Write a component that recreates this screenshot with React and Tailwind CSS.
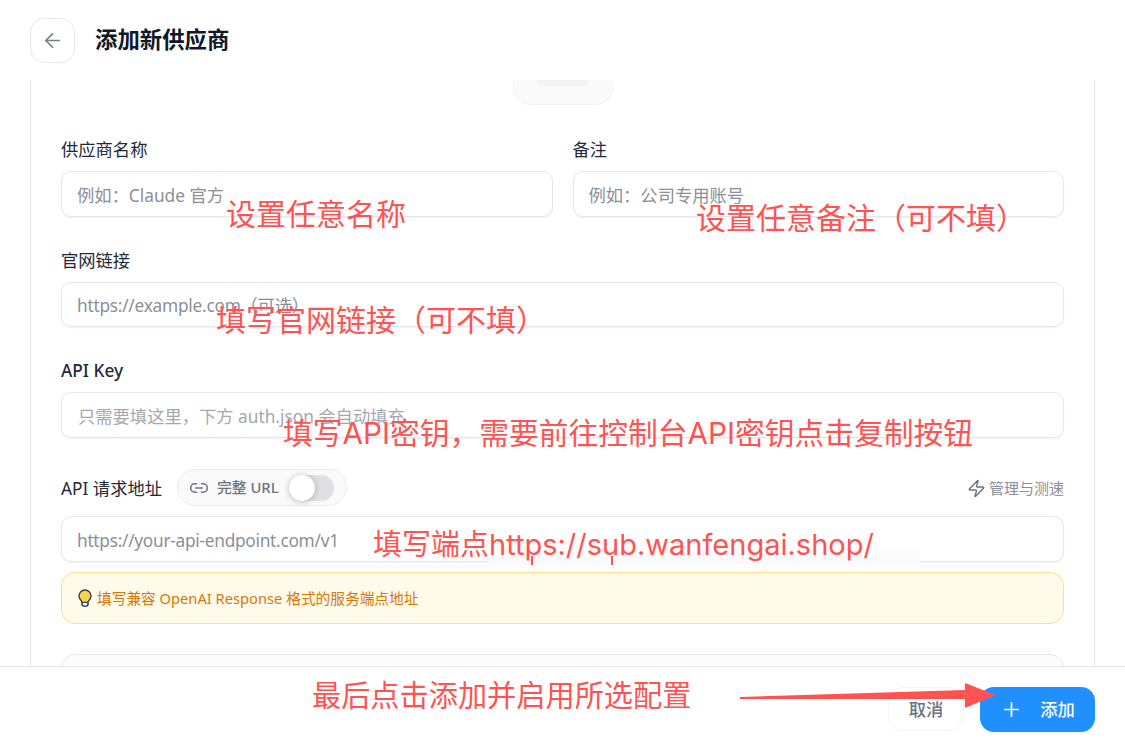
import React from "react";
import { ArrowLeft, Link2, Zap, Plus } from "lucide-react";

const FONT = "[font-family:'Noto_Sans','Noto_Sans_CJK_SC',sans-serif]";
const NOTE_FONT = "[font-family:Inter,'Noto_Sans_CJK_SC',sans-serif]";

function Label({ children, className = "" }) {
  return <div className={`text-[17.3px] leading-[20px] text-[#1f2937] ${className}`}>{children}</div>;
}

function Field({ placeholder, className = "" }) {
  return (
    <input
      readOnly
      placeholder={placeholder}
      className={`w-full rounded-[10px] border border-[#e5e7eb] bg-white px-[15px] pt-[2px] text-[17.3px] shadow-[0_1px_2px_rgba(0,0,0,0.06)] outline-none ${className}`}
    />
  );
}

function Note({ className, children }) {
  return (
    <div className={`absolute whitespace-nowrap leading-[40px] text-[#ff5252] ${NOTE_FONT} ${className}`}>
      {children}
    </div>
  );
}

function Bulb() {
  return (
    <svg width="14" height="18" viewBox="0 0 14 18" fill="none" aria-hidden="true" className="shrink-0">
      <path
        d="M7 1a6 6 0 0 0-6 6c0 2.2 1.2 3.5 2.3 4.7.5.5.7 1 .7 1.6V15a2 2 0 0 0 2 2h2a2 2 0 0 0 2-2v-1.7c0-.6.2-1.1.7-1.6C11.8 10.5 13 9.2 13 7a6 6 0 0 0-6-6z"
        fill="#fcd34d"
        stroke="#374151"
        strokeWidth="1.4"
      />
      <path d="M4.2 13.4h5.6V15a2 2 0 0 1-2 2H6.2a2 2 0 0 1-2-2z" fill="#fff" stroke="#374151" strokeWidth="1.2" />
    </svg>
  );
}

export default function App() {
  return (
    <div className={`relative flex h-[750px] w-[1125px] flex-col overflow-hidden bg-white ${FONT}`}>
      <header className="flex h-20 shrink-0 items-start gap-[20px] pl-[30px] pt-[18px]">
        <button className="flex h-[45px] w-[45px] items-center justify-center rounded-[14px] border border-[#e5e7eb] bg-white text-[#7b7f8a]">
          <ArrowLeft size={23} strokeWidth={1.8} />
        </button>
        <h1 className="mt-[7px] text-[22.4px] font-bold leading-[30px] text-[#111827]">添加新供应商</h1>
      </header>

      <main className="min-h-0 flex-1 overflow-hidden px-[30px]">
        <div className="h-full border-x border-[#e5e7eb] px-[30px]">
          <div className="flex justify-center">
            <div className="flex h-[25px] w-[100px] justify-center rounded-b-[18px] border border-t-0 border-[#f3f3f3] bg-[#fafafa]">
              <div className="h-[6px] w-[53px] rounded-b-[12px] bg-[#f3f3f3]" />
            </div>
          </div>

          <div className="mt-[35px] grid grid-cols-2 gap-x-[20px]">
            <div>
              <Label>供应商名称</Label>
              <Field placeholder="例如：Claude 官方" className="mt-[11px] h-[46px] placeholder:text-[#8b8f98]" />
            </div>
            <div>
              <Label>备注</Label>
              <Field placeholder="例如：公司专用账号" className="mt-[11px] h-[46px] placeholder:text-[#8b8f98]" />
            </div>
          </div>

          <Label className="mt-[34px]">官网链接</Label>
          <Field placeholder="https://example.com（可选）" className="mt-[11px] h-[45px] tracking-[-0.25px] placeholder:text-[#8b8f98]" />

          <Label className="mt-[34px] font-medium">API Key</Label>
          <Field placeholder="只需要填这里，下方 auth.json 会自动填充" className="mt-[11px] h-[46px] pl-[16px] placeholder:text-[#a3a7b0]" />

          <div className="mt-[31px] flex h-[37px] items-center">
            <Label className="pt-[2px]">API 请求地址</Label>
            <div className="ml-[15px] flex h-[37px] w-[170px] items-center rounded-full border border-[#ececee] bg-[#fafafa] pl-[11px]">
              <Link2 size={20} strokeWidth={1.8} className="text-[#6b7280]" />
              <span className="ml-[8px] text-[14.8px] font-medium text-[#6b7280]">完整 URL</span>
              <div className="ml-[10px] flex h-[26px] w-[45px] items-center rounded-full bg-[#e0e0e3]">
                <div className="h-[26px] w-[26px] rounded-full bg-white shadow-[0_1px_6px_rgba(0,0,0,0.25)]" />
              </div>
            </div>
            <div className="ml-auto flex items-center gap-[3px] pt-[1px] text-[15px] text-[#8a8f98]">
              <Zap size={19} strokeWidth={1.8} className="text-[#6b7280]" />
              <span>管理与测速</span>
            </div>
          </div>

          <Field placeholder="https://your-api-endpoint.com/v1" className="mt-[10px] h-[46px] tracking-[-0.28px] placeholder:text-[#8b8f98]" />

          <div className="mt-[10px] flex h-[52px] items-center gap-[5px] rounded-[14px] border border-[#fde08a] bg-[#fffbeb] pl-[16px] text-[14.7px] text-[#d97706]">
            <Bulb />
            <span className="pt-[1px]">填写兼容 OpenAI Response 格式的服务端点地址</span>
          </div>

          <div className="mt-[30px] h-[60px] rounded-t-[14px] border border-[#e5e7eb] bg-[#fcfcfd]" />
        </div>
      </main>

      <footer className="flex h-[84px] shrink-0 items-start justify-end gap-[16px] border-t border-[#e5e7eb] bg-white pr-[30px] pt-[20px]">
        <button className="h-[44px] w-[76px] rounded-[14px] border border-[#f3f4f6] bg-white pt-[2px] text-[17.3px] font-medium text-[#6b7280]">
          取消
        </button>
        <button className="flex h-[45px] w-[115px] items-center justify-center gap-[17px] rounded-[14px] bg-[#2090ff] text-[17.3px] font-medium text-white">
          <Plus size={23} strokeWidth={1.8} />
          <span className="pt-[1px]">添加</span>
        </button>
      </footer>

      <Note className="left-[226px] top-[194px] text-[30px]">设置任意名称</Note>
      <Note className="left-[696px] top-[198px] text-[30px]">设置任意备注（可不填）</Note>
      <Note className="left-[216px] top-[300px] text-[30px]">填写官网链接（可不填）</Note>
      <Note className="left-[283px] top-[413px] text-[29.75px]">填写API密钥，需要前往控制台API密钥点击复制按钮</Note>

      <div className="absolute left-[488px] top-[538px] h-[26px] w-[432px] bg-gradient-to-b from-white to-[#fafafa]" />
      <div className="absolute left-[531px] top-[556px] h-[9px] w-[1.5px] bg-[#ff5252]" />
      <div className="absolute left-[611px] top-[556px] h-[9px] w-[1.5px] bg-[#ff5252]" />
      <Note className="left-[373px] top-[525px] h-[36px] overflow-hidden text-[29px]">填写端点https://sub.wanfengai.shop/</Note>

      <Note className="left-[312px] top-[676px] text-[29.2px]">最后点击添加并启用所选配置</Note>

      <svg className="absolute left-[735px] top-[675px]" width="265" height="40" viewBox="0 0 265 40" aria-hidden="true">
        <polygon points="5,22 230,15 230,8 261,20 230,33 230,24 5,24" fill="#ff5252" />
      </svg>
    </div>
  );
}
